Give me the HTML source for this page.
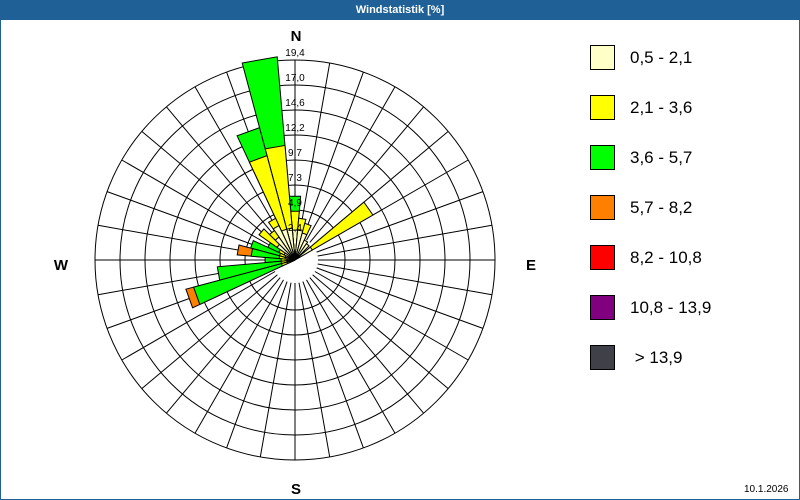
<!DOCTYPE html>
<html><head><meta charset="utf-8"><style>
body{margin:0;width:800px;height:500px;overflow:hidden;background:#fff;font-family:"Liberation Sans",sans-serif}
#t{position:absolute;left:0;top:0;width:800px;height:20px;background:#1f6096;color:#fff;font-size:11px;text-align:center;line-height:20px;font-weight:bold}
#f{position:absolute;left:0;top:20px;width:798px;height:479px;border:1px solid #1f6096;border-top:none}
.lg{position:absolute;left:590px;width:23px;height:23px;border:1px solid #000}
.lt{position:absolute;left:630px;font-size:17px;color:#000}
</style></head><body>
<div id="t">Windstatistik [%]</div>
<div id="f"></div>
<svg id="s" width="800" height="500" style="position:absolute;left:0;top:0"></svg>
<div class="lg" style="top:45px;background:#ffffc8"></div><div class="lt" style="top:48px">0,5 - 2,1</div>
<div class="lg" style="top:95px;background:#ffff00"></div><div class="lt" style="top:98px">2,1 - 3,6</div>
<div class="lg" style="top:145px;background:#00ff00"></div><div class="lt" style="top:148px">3,6 - 5,7</div>
<div class="lg" style="top:195px;background:#ff8000"></div><div class="lt" style="top:198px">5,7 - 8,2</div>
<div class="lg" style="top:245px;background:#ff0000"></div><div class="lt" style="top:248px">8,2 - 10,8</div>
<div class="lg" style="top:295px;background:#800080"></div><div class="lt" style="top:298px">10,8 - 13,9</div>
<div class="lg" style="top:345px;background:#404048"></div><div class="lt" style="top:348px">&nbsp;&gt; 13,9</div>
<div style="position:absolute;left:744px;top:484px;font-size:10px">10.1.2026</div>
<script>
var cx=295,cy=260,s='';
function P(a,r){a=a*Math.PI/180;return [(cx+r*Math.sin(a)).toFixed(1),(cy-r*Math.cos(a)).toFixed(1)];}
for(var r=50;r<=200;r+=25)s+='<circle cx="'+cx+'" cy="'+cy+'" r="'+r+'" fill="none" stroke="#000" stroke-width="1"/>';
for(var a=0;a<360;a+=10){var p=P(a,23),q=P(a,200);s+='<line x1="'+p[0]+'" y1="'+p[1]+'" x2="'+q[0]+'" y2="'+q[1]+'" stroke="#000" stroke-width="1"/>';}
var C=['#ffffc8','#ffff00','#00ff00','#ff8000'];
var W=[[0,[30,49,64]],[10,[30,42]],[20,[28,38]],[30,[22]],[40,[20]],[55,[20,90]],
[350,[32,115,204]],[340,[32,108,137]],[330,[38,46]],[320,[28,36]],[310,[22,44]],[300,[12,18,30]],
[290,[10,16,46]],[280,[10,16,44,58]],[270,[8,14,30]],[260,[8,14,78]],[250,[8,14,105,113]]];
W.forEach(function(w){var a=w[0],rs=w[1];for(var i=rs.length-1;i>=0;i--){var p=P(a-5,rs[i]),q=P(a+5,rs[i]);
s+='<polygon points="'+cx+','+cy+' '+p[0]+','+p[1]+' '+q[0]+','+q[1]+'" fill="'+C[i]+'" stroke="#000" stroke-width="1"/>';}});
var L=['2,4','4,9','7,3','9,7','12,2','14,6','17,0','19,4'];
for(var k=0;k<8;k++)s+='<text x="'+cx+'" y="'+(cy-25*(k+1)-4)+'" font-size="10" text-anchor="middle" font-family="Liberation Sans">'+L[k]+'</text>';
s+='<text x="296" y="41" font-size="15" font-weight="bold" text-anchor="middle">N</text>';
s+='<text x="296" y="494" font-size="15" font-weight="bold" text-anchor="middle">S</text>';
s+='<text x="61" y="270" font-size="15" font-weight="bold" text-anchor="middle">W</text>';
s+='<text x="531" y="270" font-size="15" font-weight="bold" text-anchor="middle">E</text>';
document.getElementById('s').innerHTML=s;
</script>
</body></html>
